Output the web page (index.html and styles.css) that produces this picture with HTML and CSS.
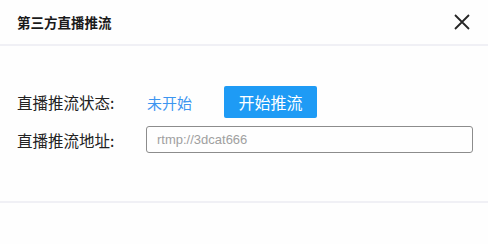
FILE: index.html
```html
<!DOCTYPE html>
<html lang="zh-CN">
<head>
<meta charset="utf-8">
<link rel="stylesheet" href="styles.css">
</head>
<body>
<div class="dialog">
  <div class="header">
    <div class="title">第三方直播推流</div>
    <div class="close">
      <svg width="16" height="16" viewBox="0 0 16 16"><path d="M1 1 L15 15 M15 1 L1 15" stroke="#262626" stroke-width="1.8" fill="none"/></svg>
    </div>
  </div>
  <div class="body">
    <div class="row">
      <div class="label">直播推流状态:</div>
      <div class="status">未开始</div>
      <div class="btn">开始推流</div>
    </div>
    <div class="row">
      <div class="label">直播推流地址:</div>
      <div class="input"><span class="ph">rtmp://3dcat666</span></div>
    </div>
  </div>
  <div class="footer"></div>
</div>
</body>
</html>
```

FILE: styles.css
```css
html, body {
  margin: 0;
  padding: 0;
  background: #fefefe;
}
body {
  font-family: "Noto Sans CJK SC", "Liberation Sans", sans-serif;
  color: #222;
  width: 488px;
  height: 244px;
  overflow: hidden;
}
.dialog {
  display: flex;
  flex-direction: column;
}
.header {
  height: 44px;
  border-bottom: 2px solid #f0f0f5;
  display: flex;
  align-items: center;
  justify-content: space-between;
  padding: 0 17px;
}
.title {
  font-size: 13.5px;
  font-weight: 700;
  color: #1a1a1a;
}
.close {
  display: flex;
  width: 16px;
  height: 16px;
  margin-right: 1px;
  margin-top: -1px;
}
.body {
  padding: 40px 15px 0 17px;
  display: flex;
  flex-direction: column;
  gap: 8px;
  height: 157px;
  box-sizing: border-box;
  border-bottom: 2px solid #f0f0f5;
}
.row {
  display: flex;
  align-items: center;
}
.label {
  width: 130px;
  font-size: 15.5px;
  color: #222;
}
.status {
  font-size: 15px;
  color: #3d95f0;
  width: 77px;
}
.btn {
  width: 93px;
  height: 32px;
  background: #1e9bf5;
  color: #fff;
  font-size: 16px;
  border-radius: 2px;
  display: flex;
  align-items: center;
  justify-content: center;
}
.input {
  width: 327px;
  height: 27px;
  box-sizing: border-box;
  border: 1.5px solid #8c8c8c;
  border-radius: 3px;
  display: flex;
  align-items: center;
  padding-left: 10px;
  margin-left: -1px;
}
.ph {
  font-family: "Liberation Sans", sans-serif;
  font-size: 13px;
  color: #a0a0a0;
}
```
